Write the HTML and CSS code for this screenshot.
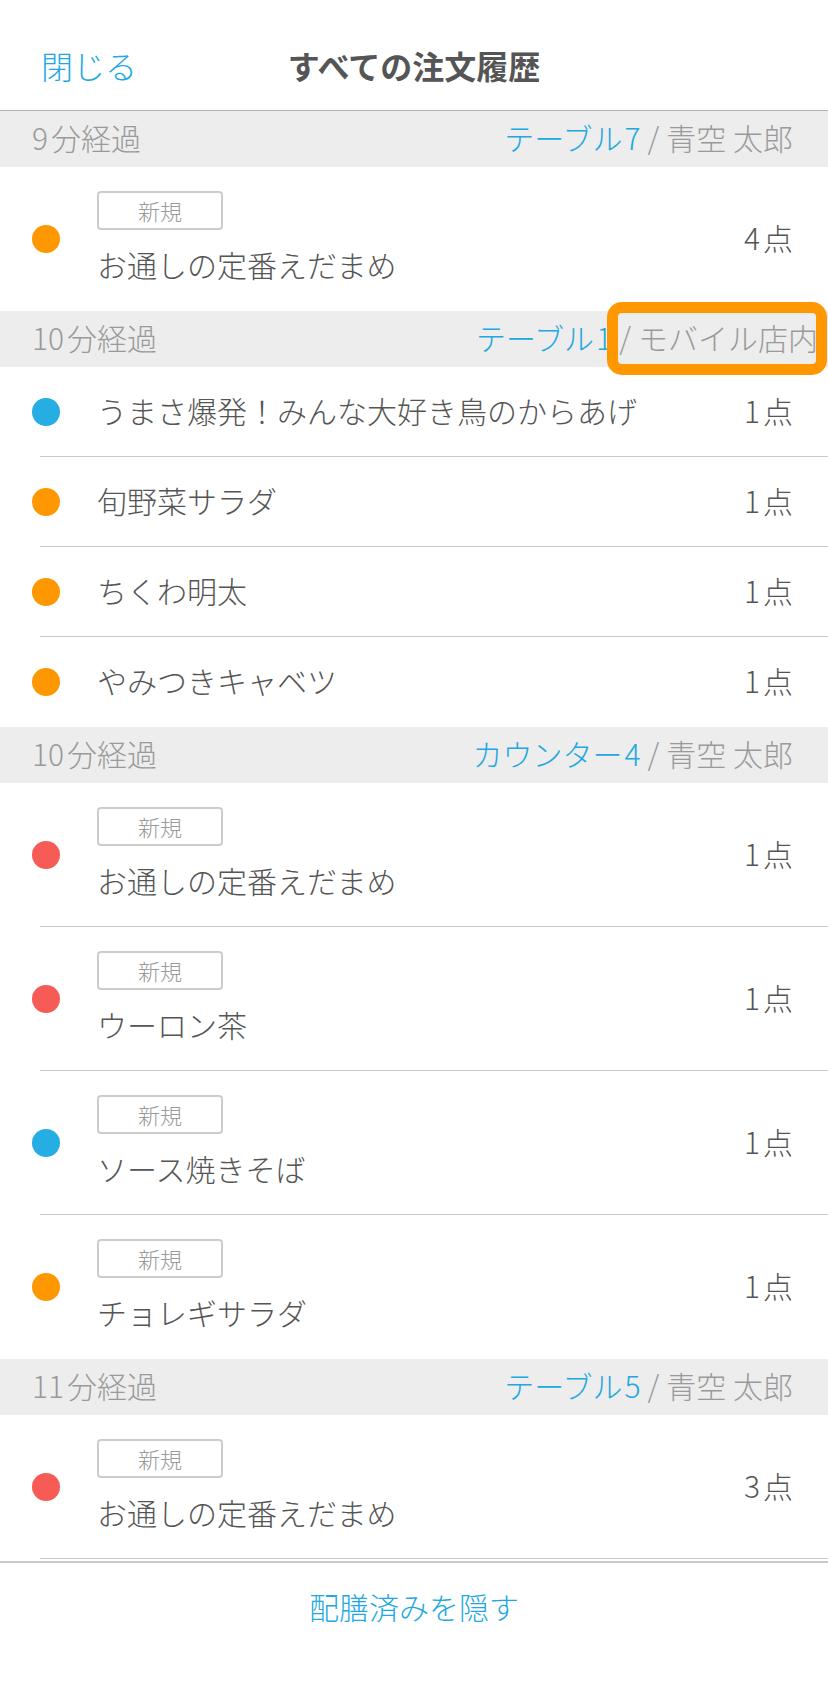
FILE: index.html
```html
<!DOCTYPE html>
<html lang="ja">
<head>
<meta charset="utf-8">
<title>すべての注文履歴</title>
<link rel="stylesheet" href="styles.css">
</head>
<body>
  <header class="nav">
    <div class="nav-close">閉じる</div>
    <div class="nav-title">すべての注文履歴</div>
    <div></div>
  </header>

  <main class="list">
    <section class="group">
      <div class="group-head">
        <span class="elapsed"><span class="num">9</span>分経過</span>
        <span class="where"><span class="place">テーブル<span class="num">7</span></span><span class="sep">/</span>青空 太郎</span>
      </div>
      <div class="row row-new no-line">
        <span class="dot dot-orange"></span>
        <div class="item"><span class="badge">新規</span><span class="name">お通しの定番えだまめ</span></div>
        <span class="qty"><span class="num">4</span>点</span>
      </div>
    </section>

    <section class="group">
      <div class="group-head group-head-wide">
        <span class="elapsed"><span class="num">10</span>分経過</span>
        <span class="where"><span class="place">テーブル<span class="num">1</span></span><span class="sep">/</span>モバイル店内</span>
        <span class="highlight"></span>
      </div>
      <div class="row row-simple">
        <span class="dot dot-blue"></span>
        <div class="item"><span class="name">うまさ爆発！みんな大好き鳥のからあげ</span></div>
        <span class="qty"><span class="num">1</span>点</span>
      </div>
      <div class="row row-simple">
        <span class="dot dot-orange"></span>
        <div class="item"><span class="name">旬野菜サラダ</span></div>
        <span class="qty"><span class="num">1</span>点</span>
      </div>
      <div class="row row-simple">
        <span class="dot dot-orange"></span>
        <div class="item"><span class="name">ちくわ明太</span></div>
        <span class="qty"><span class="num">1</span>点</span>
      </div>
      <div class="row row-simple no-line">
        <span class="dot dot-orange"></span>
        <div class="item"><span class="name">やみつきキャベツ</span></div>
        <span class="qty"><span class="num">1</span>点</span>
      </div>
    </section>

    <section class="group">
      <div class="group-head">
        <span class="elapsed"><span class="num">10</span>分経過</span>
        <span class="where"><span class="place">カウンター<span class="num">4</span></span><span class="sep">/</span>青空 太郎</span>
      </div>
      <div class="row row-new">
        <span class="dot dot-red"></span>
        <div class="item"><span class="badge">新規</span><span class="name">お通しの定番えだまめ</span></div>
        <span class="qty"><span class="num">1</span>点</span>
      </div>
      <div class="row row-new">
        <span class="dot dot-red"></span>
        <div class="item"><span class="badge">新規</span><span class="name">ウーロン茶</span></div>
        <span class="qty"><span class="num">1</span>点</span>
      </div>
      <div class="row row-new">
        <span class="dot dot-blue"></span>
        <div class="item"><span class="badge">新規</span><span class="name">ソース焼きそば</span></div>
        <span class="qty"><span class="num">1</span>点</span>
      </div>
      <div class="row row-new no-line">
        <span class="dot dot-orange"></span>
        <div class="item"><span class="badge">新規</span><span class="name">チョレギサラダ</span></div>
        <span class="qty"><span class="num">1</span>点</span>
      </div>
    </section>

    <section class="group">
      <div class="group-head">
        <span class="elapsed"><span class="num">11</span>分経過</span>
        <span class="where"><span class="place">テーブル<span class="num">5</span></span><span class="sep">/</span>青空 太郎</span>
      </div>
      <div class="row row-new">
        <span class="dot dot-red"></span>
        <div class="item"><span class="badge">新規</span><span class="name">お通しの定番えだまめ</span></div>
        <span class="qty"><span class="num">3</span>点</span>
      </div>
    </section>
  </main>

  <footer class="footer">
    <span class="footer-btn">配膳済みを隠す</span>
  </footer>
</body>
</html>
```

FILE: styles.css
```css
* {
  box-sizing: border-box;
  margin: 0;
  padding: 0;
}

html,
body {
  width: 828px;
  height: 1690px;
}

body {
  font-family: "Noto Sans CJK JP", "Noto Sans", sans-serif;
  font-weight: 300;
  background: #ffffff;
  color: #555555;
  display: flex;
  flex-direction: column;
  overflow: hidden;
}

.num {
  margin-right: 3px;
}

/* Navigation bar */
.nav {
  height: 111px;
  padding-top: 20px;
  border-bottom: 1px solid #b4b4b4;
  display: grid;
  grid-template-columns: 1fr auto 1fr;
  align-items: center;
  flex: none;
}

.nav-close {
  padding-left: 41px;
  color: #22a8e1;
  font-size: 32px;
}

.nav-title {
  font-size: 32px;
  font-weight: 700;
  color: #555555;
}

/* List */
.list {
  flex: 1;
  overflow: hidden;
}

.group-head {
  position: relative;
  height: 56px;
  background: #ededed;
  display: flex;
  align-items: center;
  justify-content: space-between;
  padding: 0 35px 4px 32px;
  font-size: 30px;
  color: #9a9a9a;
}

.group-head-wide {
  padding-right: 10px;
}

.place {
  color: #22a8e1;
}

.place .num {
  margin-left: 2px;
  margin-right: 0;
}

.sep {
  margin: 0 7px;
}

.highlight {
  position: absolute;
  top: -9px;
  left: 607px;
  width: 220px;
  height: 73px;
  border: 11px solid #ff9800;
  border-radius: 15px;
}

.row {
  display: flex;
  align-items: center;
  padding: 0 35px 0 32px;
  background: linear-gradient(#c9c9c9, #c9c9c9) 40px 100% / calc(100% - 40px) 1px no-repeat;
}

.row.no-line {
  background: none;
}

.row-simple {
  height: 90px;
}

.row-new {
  height: 144px;
}

.dot {
  flex: none;
  width: 28px;
  height: 28px;
  border-radius: 50%;
  margin-right: 37px;
}

.dot-orange {
  background: #ff9800;
}

.dot-blue {
  background: #25ade4;
}

.dot-red {
  background: #f65b55;
}

.item {
  flex: 1;
  display: flex;
  flex-direction: column;
  align-items: flex-start;
  gap: 14px;
  padding-bottom: 4px;
}

.badge {
  width: 126px;
  height: 39px;
  border: 2px solid #cccccc;
  border-radius: 4px;
  display: flex;
  align-items: center;
  justify-content: center;
  font-size: 22px;
  color: #9a9a9a;
}

.name {
  font-size: 30px;
  line-height: 40px;
  color: #555555;
  white-space: nowrap;
}

.qty {
  font-size: 30px;
  color: #555555;
  padding-bottom: 4px;
}

/* Footer */
.footer {
  flex: none;
  height: 129px;
  border-top: 2px solid #c9c9c9;
  padding-bottom: 41px;
  display: flex;
  align-items: center;
  justify-content: center;
}

.footer-btn {
  font-size: 30px;
  color: #22a8e1;
}
```
